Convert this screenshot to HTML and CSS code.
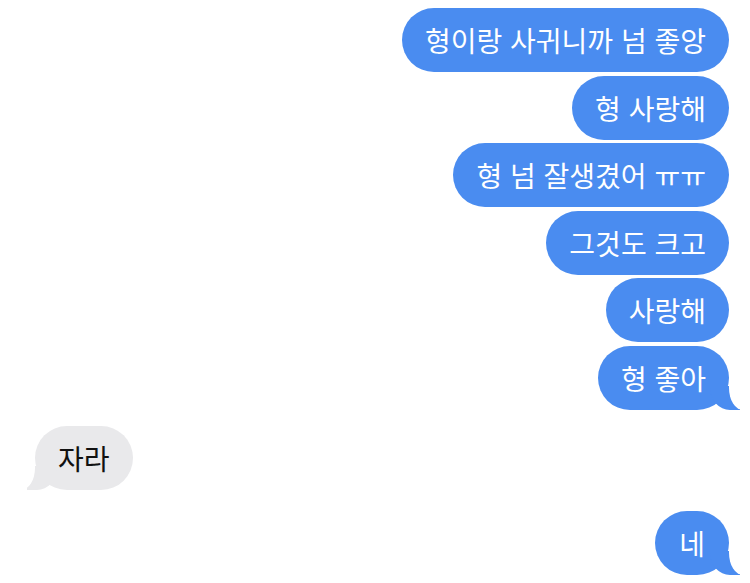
FILE: index.html
```html
<!DOCTYPE html>
<html lang="ko">
<head>
<meta charset="utf-8">
<link rel="stylesheet" href="styles.css">
</head>
<body>
<div class="chat">
  <div class="group sent-group">
    <div class="bubble sent">형이랑 사귀니까 넘 좋앙</div>
    <div class="bubble sent">형 사랑해</div>
    <div class="bubble sent">형 넘 잘생겼어 ㅠㅠ</div>
    <div class="bubble sent">그것도 크고</div>
    <div class="bubble sent">사랑해</div>
    <div class="bubble sent tail">형 좋아</div>
  </div>
  <div class="group recv-group">
    <div class="bubble recv tail">자라</div>
  </div>
  <div class="group sent-group last">
    <div class="bubble sent tail single">네</div>
  </div>
</div>
</body>
</html>
```
FILE: styles.css
```css
html, body {
  margin: 0;
  padding: 0;
  background: #ffffff;
}
body {
  width: 750px;
  height: 583px;
  overflow: hidden;
  font-family: "Noto Sans CJK KR", "Noto Sans", sans-serif;
}
.chat {
  display: flex;
  flex-direction: column;
  padding: 8px 21px 0 35px;
}
.group {
  display: flex;
  flex-direction: column;
  gap: 3.5px;
}
.sent-group {
  align-items: flex-end;
}
.recv-group {
  align-items: flex-start;
  margin-top: 16px;
}
.sent-group.last {
  margin-top: 21px;
}
.bubble {
  position: relative;
  height: 64px;
  box-sizing: border-box;
  display: flex;
  align-items: center;
  padding: 0 23px;
  border-radius: 32px;
  font-size: 28px;
  line-height: 1;
  white-space: nowrap;
  isolation: isolate;
}
.sent {
  background: #4a8cf0;
  color: #ffffff;
}
.recv {
  background: #e9e9eb;
  color: #111111;
}
.single {
  padding: 0 24px;
}
.bubble.tail::before,
.bubble.tail::after {
  content: "";
  position: absolute;
  bottom: 0;
  height: 24px;
}
.sent.tail::before {
  right: -11px;
  width: 30px;
  background: #4a8cf0;
  border-bottom-left-radius: 20px 22px;
  z-index: -1;
}
.sent.tail::after {
  right: -22px;
  width: 22px;
  background: #ffffff;
  border-bottom-left-radius: 14px 22px;
  z-index: 1;
}
.recv.tail::before {
  left: -8px;
  width: 30px;
  background: #e9e9eb;
  border-bottom-right-radius: 20px 22px;
  z-index: -1;
}
.recv.tail::after {
  left: -22px;
  width: 22px;
  background: #ffffff;
  border-bottom-right-radius: 14px 22px;
  z-index: 1;
}
```
